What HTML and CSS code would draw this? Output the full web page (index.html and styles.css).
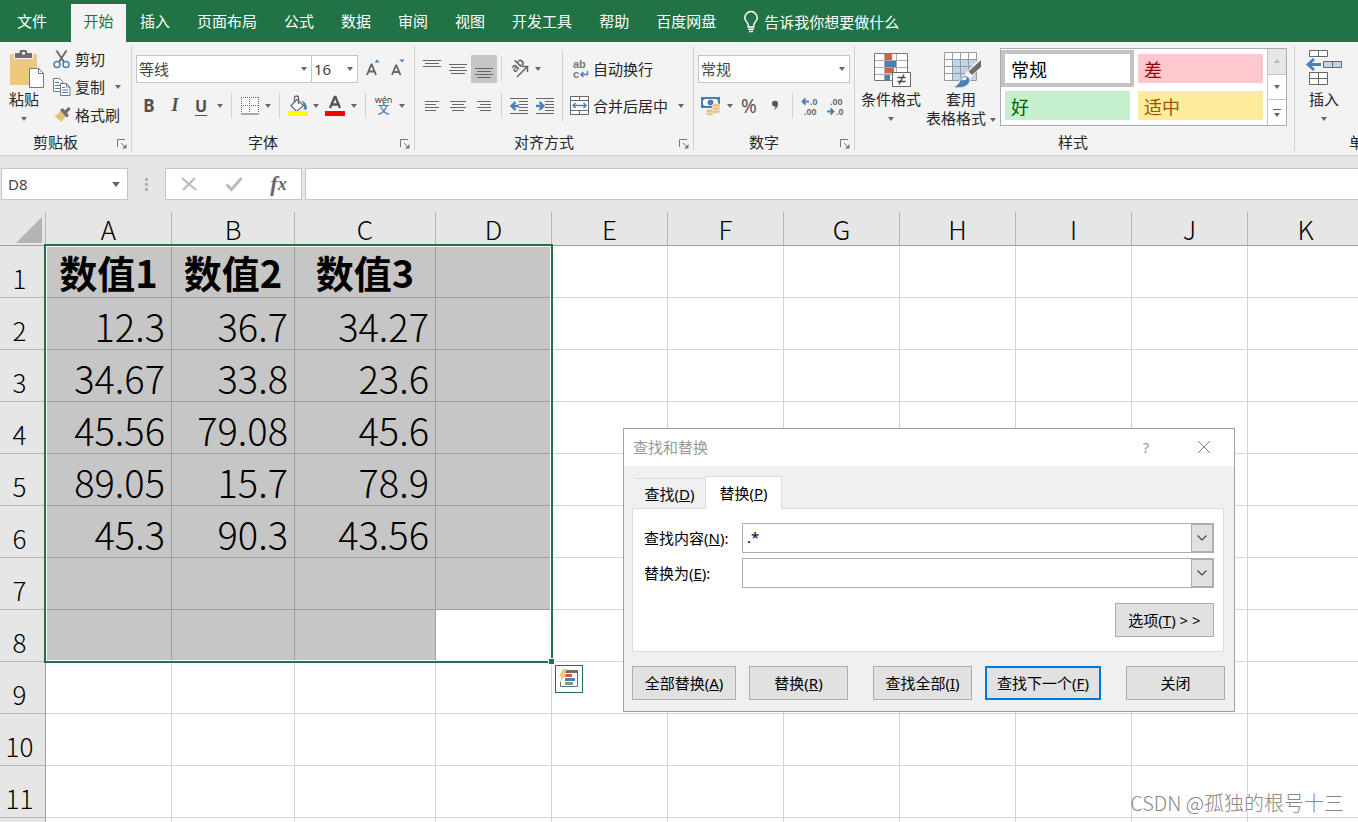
FILE: index.html
```
<!DOCTYPE html>
<html lang="zh-CN">
<head>
<meta charset="utf-8">
<title>工作表</title>
<link rel="stylesheet" href="styles.css">
</head>
<body>
<nav class="tabs">
  <button class="tab tab-file">文件</button>
  <button class="tab tab-active">开始</button>
  <button class="tab">插入</button>
  <button class="tab">页面布局</button>
  <button class="tab">公式</button>
  <button class="tab">数据</button>
  <button class="tab">审阅</button>
  <button class="tab">视图</button>
  <button class="tab">开发工具</button>
  <button class="tab">帮助</button>
  <button class="tab">百度网盘</button>
  <button class="tell">
    <svg width="16" height="22" viewBox="0 0 16 22" fill="none" stroke="#fff" stroke-width="1.5"><path d="M5.2 16v-2.500C5 11.500 1.800 10.500 1.800 6.800a6.200 6.200 0 0 1 12.400 0c0 3.700-3.200 4.700-3.400 6.700V16z"/><path d="M5 18.200h6M6 20.600h4"/></svg>
    <span>告诉我你想要做什么</span>
  </button>
</nav>

<header class="ribbon">
  <section class="group group-clip">
    <div class="group-body">
      <button class="big">
        <svg width="42" height="40" viewBox="-6 0 42 40"><path fill="#edc87e" d="M1 5h27v31H1z"/><path fill="#f3f3f3" d="M5 4h19v6H5z"/><path fill="#6d6d6d" d="M6 4h4.500V2.500Q10.500 1 12 1h4.500Q18 1 18 2.500V4H23v5H6z"/><path fill="#f3f3f3" d="M13 3h3v2.500h-3z"/><path fill="#fff" stroke="#777" d="M20.500 19.500h9l5 5v14h-14z"/><path fill="none" stroke="#777" d="M29.500 19.500v5h5"/></svg>
        <span>粘贴</span><i class="caret"></i>
      </button>
      <div class="clip-list">
        <button class="row-btn">
          <svg width="18" height="20" viewBox="0 0 18 20" fill="none"><path d="M3.500 1.500 11 13M13.500 1.500 6 13" stroke="#6d6d6d" stroke-width="2"/><circle cx="4" cy="15.500" r="3" stroke="#4a80b8" stroke-width="1.500"/><circle cx="13" cy="15.500" r="3" stroke="#4a80b8" stroke-width="1.500"/></svg>
          <span>剪切</span>
        </button>
        <button class="row-btn">
          <svg width="18" height="20" viewBox="0 0 18 20"><path fill="#fff" stroke="#777" d="M.5 1.500h6l3 3v10h-9z"/><path stroke="#4a80b8" d="M2 5.500h4M2 8.500h5M2 11.500h5"/><path fill="#fff" stroke="#777" d="M7.500 6.500h6l3.500 3.500v8.500H7.500z"/><path fill="none" stroke="#777" d="M13.500 6.500V10H17"/><path stroke="#4a80b8" d="M9 10.500h3M9 13h6M9 15.500h6"/></svg>
          <span>复制</span><i class="caret caret-gap"></i>
        </button>
        <button class="row-btn">
          <svg width="18" height="20" viewBox="0 0 18 20"><path fill="#e6bd74" d="m7 5.500 5.500 6L8.500 17 1 10.500q4 .5 6-5z"/><path fill="#6d6d6d" d="m7 5 2.500-2 2.500 2.500 3.500-3.700 2.200 2.200L14 8l2 2.500-2.500 2z"/></svg>
          <span>格式刷</span>
        </button>
      </div>
    </div>
    <div class="group-foot"><h2>剪贴板</h2><button class="launch" aria-label="剪贴板选项"><svg width="10" height="10" viewBox="0 0 10 10"><path fill="none" stroke="#777" d="M.5 8V.5H8M4 4l4 4"/><path fill="#777" d="M9.500 5v4.500H5z"/></svg></button></div>
  </section>

  <section class="group group-font">
    <div class="group-body stack">
      <div class="tool-row">
        <label class="combo combo-font"><select aria-label="字体"><option>等线</option></select></label>
        <label class="combo combo-size"><select aria-label="字号"><option>16</option></select></label>
        <button class="tool tool-slim tool-gap" aria-label="增大字号"><svg width="18" height="20" viewBox="0 0 18 20"><path fill="none" stroke="#666" stroke-width="1.900" d="M3 16 7.300 5.500h.4L12 16M4.500 12.500h6"/><path fill="#4a80b8" d="m10.500 3.500 2.500-3 2.500 3z"/></svg></button>
        <button class="tool tool-slim" aria-label="减小字号"><svg width="18" height="20" viewBox="0 0 18 20"><path fill="none" stroke="#666" stroke-width="1.800" d="M3 16 7 6.500h.4L11.500 16M4.500 13h5.500"/><path fill="#4a80b8" d="M10.500.5h5l-2.500 3z"/></svg></button>
      </div>
      <div class="tool-row">
        <button class="tool bold">B</button>
        <button class="tool italic">I</button>
        <button class="tool under">U</button>
        <button class="drop" aria-label="下划线选项"><i class="caret"></i></button>
        <i class="sep"></i>
        <button class="tool tool-slim" aria-label="边框"><svg width="18" height="18" viewBox="0 0 18 18" fill="none"><path fill="#fff" d="M0 0h18v18H0z"/><path stroke="#666" stroke-dasharray="1 1" d="M0 .5h18M0 8.500h18M.5 0v16M8.500 0v16M17.500 0v16"/><path stroke="#555" d="M0 17h18"/></svg></button>
        <button class="drop" aria-label="边框选项"><i class="caret"></i></button>
        <i class="sep"></i>
        <button class="tool tool-slim" aria-label="填充颜色"><svg width="22" height="22" viewBox="0 0 22 22"><path fill="#fff" stroke="#666" stroke-width="1.200" d="m10 4.500 6.500 6-7 6L4 10.500z"/><path fill="none" stroke="#666" stroke-width="1.300" d="M7.500 8V3Q7.500 1 9.500 1t2 2v6"/><path fill="#4a80b8" d="M14.500 5.500Q20 7 20 14.500h-3.500q1.500-4-2-9z"/><path fill="#ff0" d="M1 16h20v5H1z"/></svg></button>
        <button class="drop" aria-label="填充选项"><i class="caret"></i></button>
        <button class="tool" aria-label="字体颜色"><svg width="22" height="22" viewBox="0 0 22 22"><path fill="none" stroke="#555" stroke-width="2.300" d="m6 13 4.700-11h.8L16 13M7.500 9.500h7"/><path fill="#f00" d="M1 16h20v5H1z"/></svg></button>
        <button class="drop" aria-label="颜色选项"><i class="caret"></i></button>
        <i class="sep"></i>
        <button class="tool tool-slim pinyin"><span>wén</span><b>文</b></button>
        <button class="drop" aria-label="拼音选项"><i class="caret"></i></button>
      </div>
    </div>
    <div class="group-foot"><h2>字体</h2><button class="launch" aria-label="字体选项"><svg width="10" height="10" viewBox="0 0 10 10"><path fill="none" stroke="#777" d="M.5 8V.5H8M4 4l4 4"/><path fill="#777" d="M9.500 5v4.500H5z"/></svg></button></div>
  </section>

  <section class="group group-align">
    <div class="group-body">
      <div class="stack">
        <div class="tool-row">
          <button class="tool" aria-label="顶端对齐"><svg width="20" height="20" viewBox="0 0 20 20" stroke="#666"><path d="M1 1.500h18M3 4.500h14M1 7.500h18"/></svg></button>
          <button class="tool" aria-label="垂直居中"><svg width="20" height="20" viewBox="0 0 20 20" stroke="#666"><path d="M1 5.500h18M3 8.500h14M1 11.500h18M3 14.500h14"/></svg></button>
          <button class="tool tool-on" aria-label="底端对齐"><svg width="20" height="20" viewBox="0 0 20 20" stroke="#666"><path d="M1 9.500h18M3 12.500h14M1 15.500h18M3 18.500h14"/></svg></button>
          <i class="sep sep-near"></i>
          <button class="tool" aria-label="方向"><svg width="22" height="20" viewBox="0 0 22 20"><text class="rot-text" x="0" y="0" transform="translate(7 14) rotate(-45)">ab</text><path fill="none" stroke="#666" stroke-width="1.500" d="m9 18 10-10M14 7.500h5.500V13"/></svg></button>
          <button class="drop" aria-label="方向选项"><i class="caret"></i></button>
        </div>
        <div class="tool-row">
          <button class="tool" aria-label="左对齐"><svg width="20" height="20" viewBox="0 0 20 20" stroke="#666"><path d="M3 5.500h14M3 8.500h11M3 11.500h14M3 14.500h11"/></svg></button>
          <button class="tool" aria-label="居中"><svg width="20" height="20" viewBox="0 0 20 20" stroke="#666"><path d="M2 5.500h16M4 8.500h12M2 11.500h16M4 14.500h12"/></svg></button>
          <button class="tool" aria-label="右对齐"><svg width="20" height="20" viewBox="0 0 20 20" stroke="#666"><path d="M3 5.500h14M6 8.500h11M3 11.500h14M6 14.500h11"/></svg></button>
          <i class="sep sep-near"></i>
          <button class="tool" aria-label="减少缩进"><svg width="20" height="20" viewBox="0 0 20 20"><path stroke="#666" d="M1 2.500h18M10 5.500h9M10 8.500h9M10 11.500h9M10 14.500h9M1 17.500h18"/><path fill="none" stroke="#4a80b8" stroke-width="2.400" d="M10 10H3M6.500 6l-4 4 4 4"/></svg></button>
          <button class="tool" aria-label="增加缩进"><svg width="20" height="20" viewBox="0 0 20 20"><path stroke="#666" d="M1 2.500h18M10 5.500h9M10 8.500h9M10 11.500h9M10 14.500h9M1 17.500h18"/><path fill="none" stroke="#4a80b8" stroke-width="2.400" d="M1 10h7M4.500 6l4 4-4 4"/></svg></button>
        </div>
      </div>
      <i class="sep sep-tall"></i>
      <div class="stack">
        <button class="row-btn wide-btn">
          <svg width="20" height="24" viewBox="0 0 20 24"><text class="abc" x="3" y="11">ab</text><text class="abc" x="3" y="21">c</text><path fill="none" stroke="#4a80b8" stroke-width="1.400" d="M17.500 14v3.500H11M13.500 15l-2.700 2.500 2.700 2.500"/></svg>
          <span>自动换行</span>
        </button>
        <button class="row-btn wide-btn">
          <svg width="20" height="20" viewBox="0 0 20 20"><path fill="#fff" stroke="#666" d="M.5.500h18v18H.5zM.5 4.500h18M.5 14.500h18M9.500.500v4M9.500 14.500v4"/><path fill="none" stroke="#4a80b8" stroke-width="1.500" d="M3 9.500h13M5.500 7 3 9.500 5.500 12M13.500 7l2.500 2.500-2.500 2.500"/></svg>
          <span>合并后居中</span><i class="caret caret-gap caret-far"></i>
        </button>
      </div>
    </div>
    <div class="group-foot"><h2>对齐方式</h2><button class="launch" aria-label="对齐选项"><svg width="10" height="10" viewBox="0 0 10 10"><path fill="none" stroke="#777" d="M.5 8V.5H8M4 4l4 4"/><path fill="#777" d="M9.500 5v4.500H5z"/></svg></button></div>
  </section>

  <section class="group group-num">
    <div class="group-body stack">
      <div class="tool-row"><label class="combo combo-fill"><select aria-label="数字格式"><option>常规</option></select></label></div>
      <div class="tool-row">
        <button class="tool" aria-label="会计格式"><svg width="20" height="20" viewBox="0 0 20 20"><path fill="#4a80b8" d="M0 1h19v11H0z"/><path fill="#fff" d="M2 4.500 4 3h11l2 1.500v4L15 10H4L2 8.500z"/><circle cx="9.500" cy="6.500" r="3" fill="#4a80b8"/><g fill="#e9bf78" stroke="#f3f3f3" stroke-width=".7"><ellipse cx="9" cy="17.500" rx="4" ry="2"/><ellipse cx="9" cy="15" rx="4" ry="2"/><ellipse cx="15" cy="15.500" rx="4" ry="2"/><ellipse cx="15" cy="12.500" rx="4" ry="2"/><ellipse cx="15" cy="9.500" rx="4" ry="2"/></g></svg></button>
        <button class="drop" aria-label="会计格式选项"><i class="caret"></i></button>
        <button class="tool percent">%</button>
        <button class="tool" aria-label="千位分隔"><svg width="12" height="16" viewBox="0 0 12 16"><path fill="#555" d="M3 6a3 3 0 1 1 6-.3Q9 10 4.500 12q2.300-2 1.900-3.500Q3.300 9 3 6z"/></svg></button>
        <i class="sep sep-near"></i>
        <button class="tool" aria-label="增加小数位数"><svg width="20" height="24" viewBox="0 0 20 24"><text class="dec" x="10" y="11">.0</text><text class="dec" x="4" y="21">.00</text><path fill="none" stroke="#4a80b8" stroke-width="1.800" d="M9 7.500H3M5.500 4.500l-3 3 3 3"/></svg></button>
        <button class="tool" aria-label="减少小数位数"><svg width="20" height="24" viewBox="0 0 20 24"><text class="dec" x="4" y="11">.00</text><text class="dec" x="10" y="21">.0</text><path fill="none" stroke="#4a80b8" stroke-width="1.800" d="M1 17.500h6M4.500 14.500l3 3-3 3"/></svg></button>
      </div>
    </div>
    <div class="group-foot"><h2>数字</h2><button class="launch" aria-label="数字选项"><svg width="10" height="10" viewBox="0 0 10 10"><path fill="none" stroke="#777" d="M.5 8V.5H8M4 4l4 4"/><path fill="#777" d="M9.500 5v4.500H5z"/></svg></button></div>
  </section>

  <section class="group group-style">
    <div class="group-body">
      <button class="big big-wide">
        <svg width="40" height="40" viewBox="0 0 40 40"><path fill="#fff" d="M3.500 4.500h33v27h-33z"/><path fill="#d9603f" d="M14 5h7v6h-7zM14 19h9v5.500h-9z"/><path fill="#4a80b8" d="M14 12h11v6H14zM14 26h5v5h-5z"/><path fill="none" stroke="#aaa" d="M3.500 11.500h33M3.500 18.500h33M3.500 25.500h33M13.500 4.500v27M25.500 4.500v27"/><path fill="none" stroke="#777" d="M3.500 4.500h33v27h-33z"/><path fill="#fff" stroke="#666" d="M21.500 23.500h18v14h-18z"/><path fill="none" stroke="#444" stroke-width="1.300" d="M26.500 28.500h8M26.500 32.500h8M33 25.500l-5 10"/></svg>
        <span>条件格式</span><i class="caret"></i>
      </button>
      <button class="big big-wide">
        <svg width="40" height="40" viewBox="0 0 40 40"><path fill="#fff" d="M3.500 3.500h32v28h-32z"/><path fill="#c0d4ea" d="M12 10h23.500v21.500H12z"/><path fill="none" stroke="#999" d="M3.500 10.500h32M3.500 17.500h32M3.500 24.500h32M11.500 3.500v28M19.500 3.500v28M27.500 3.500v28M3.500 3.500h32v28h-32z"/><path stroke="#f3f3f3" stroke-width="7" d="m26 28 13-14"/><path fill="#6d6d6d" d="M40 11v7L31 26l-3.500-3.500z"/><path fill="#4a80b8" stroke="#f3f3f3" d="M12 38.500q6-3 7.500-8 3.500-6 8-2.500 3.500 4-1 8-5 4-14.500 2.500z"/><path fill="#fff" d="M20.500 31q3-5 5.500-2-1 3-5.500 2z"/></svg>
        <span>套用</span><span class="nowrap">表格格式<i class="caret caret-near"></i></span>
      </button>
      <div class="gallery">
        <div class="swatches">
          <button class="swatch normal">常规</button>
          <button class="swatch bad">差</button>
          <button class="swatch good">好</button>
          <button class="swatch neutral">适中</button>
        </div>
        <div class="gallery-nav">
          <button class="nav-off" aria-label="上一行"><i class="caret caret-up"></i></button>
          <button aria-label="下一行"><i class="caret"></i></button>
          <button class="more" aria-label="更多样式"><i class="bar"></i><i class="caret"></i></button>
        </div>
      </div>
    </div>
    <div class="group-foot"><h2>样式</h2></div>
  </section>

  <section class="group group-cells">
    <div class="group-body">
      <button class="big big-cells">
        <svg width="38" height="40" viewBox="0 0 38 40"><path fill="#fff" stroke="#666" d="M4.500 1.500h18v6h-18zM13.500 1.500v6M4.500 23.500h18v12h-18zM4.500 29.500h18M13.500 23.500v12"/><path fill="#c0d4ea" stroke="#666" d="M18.500 12.500h18v6h-18zM27.500 12.500v6"/><path fill="none" stroke="#4a80b8" stroke-width="2.800" d="M16 15.500H4M9 10l-6 5.500L9 21"/></svg>
        <span>插入</span><i class="caret"></i>
      </button>
    </div>
    <div class="group-foot"><h2>单元格</h2></div>
  </section>
</header>

<div class="formula-bar">
  <label class="combo name-box"><select aria-label="名称框"><option>D8</option></select></label>
  <div class="dots"><i></i><i></i><i></i></div>
  <div class="fx-box">
    <button aria-label="取消"><svg width="16" height="16" viewBox="0 0 16 16"><path stroke="#bbb" stroke-width="2" d="m1 2 14 12M14 2 2 14"/></svg></button>
    <button aria-label="输入"><svg width="18" height="16" viewBox="0 0 18 16"><path fill="none" stroke="#bbb" stroke-width="3" d="m1.500 8.500 5 5L16.500 2"/></svg></button>
    <button class="fx"><i>f</i><small>x</small></button>
  </div>
  <input class="formula" type="text" aria-label="编辑栏">
</div>

<main class="sheet">
  <table class="grid">
    <colgroup><col class="c-head"><col class="c-a"><col class="c-b"><col class="c-c"><col span="8" class="c-std"></colgroup>
    <thead><tr><th class="corner"><svg width="26" height="26" viewBox="0 0 26 26"><path fill="#b4b4b4" d="M26 0v26H0z"/></svg></th><th>A</th><th>B</th><th>C</th><th>D</th><th>E</th><th>F</th><th>G</th><th>H</th><th>I</th><th>J</th><th>K</th></tr></thead>
    <tbody>
      <tr class="title-row"><th>1</th><td class="sel">数值1</td><td class="sel">数值2</td><td class="sel">数值3</td><td class="sel"></td><td></td><td></td><td></td><td></td><td></td><td></td><td></td></tr>
      <tr><th>2</th><td class="sel">12.3</td><td class="sel">36.7</td><td class="sel">34.27</td><td class="sel"></td><td></td><td></td><td></td><td></td><td></td><td></td><td></td></tr>
      <tr><th>3</th><td class="sel">34.67</td><td class="sel">33.8</td><td class="sel">23.6</td><td class="sel"></td><td></td><td></td><td></td><td></td><td></td><td></td><td></td></tr>
      <tr><th>4</th><td class="sel">45.56</td><td class="sel">79.08</td><td class="sel">45.6</td><td class="sel"></td><td></td><td></td><td></td><td></td><td></td><td></td><td></td></tr>
      <tr><th>5</th><td class="sel">89.05</td><td class="sel">15.7</td><td class="sel">78.9</td><td class="sel"></td><td></td><td></td><td></td><td></td><td></td><td></td><td></td></tr>
      <tr><th>6</th><td class="sel">45.3</td><td class="sel">90.3</td><td class="sel">43.56</td><td class="sel"></td><td></td><td></td><td></td><td></td><td></td><td></td><td></td></tr>
      <tr><th>7</th><td class="sel"></td><td class="sel"></td><td class="sel"></td><td class="sel"></td><td></td><td></td><td></td><td></td><td></td><td></td><td></td></tr>
      <tr><th>8</th><td class="sel"></td><td class="sel"></td><td class="sel"></td><td></td><td></td><td></td><td></td><td></td><td></td><td></td><td></td></tr>
      <tr><th>9</th><td></td><td></td><td></td><td></td><td></td><td></td><td></td><td></td><td></td><td></td><td></td></tr>
      <tr><th>10</th><td></td><td></td><td></td><td></td><td></td><td></td><td></td><td></td><td></td><td></td><td></td></tr>
      <tr><th>11</th><td></td><td></td><td></td><td></td><td></td><td></td><td></td><td></td><td></td><td></td><td></td></tr>
      <tr><th></th><td></td><td></td><td></td><td></td><td></td><td></td><td></td><td></td><td></td><td></td><td></td></tr>
    </tbody>
  </table>
  <div class="selection"><i class="handle"></i></div>
  <button class="quick" aria-label="快速分析"><svg width="20" height="20" viewBox="0 0 20 20"><path fill="#fff" stroke="#6d6d6d" d="M1.500 3h17v14.500h-17z"/><path fill="#6d6d6d" d="M6 1h13v3H6z"/><path fill="#fff" d="M0 0h6v13H0z"/><path fill="#dd5433" d="M6 5h7v3H6z"/><path fill="#4a80b8" d="M6 9h10v3H6z"/><path fill="#68a793" d="M6 13h8v3H6z"/><path fill="#edc87e" d="M4 0h4L6 4.500h2L1 13l1.500-5.500H0z"/></svg></button>
</main>

<section class="dialog" role="dialog" aria-labelledby="dlg-title">
  <div class="dlg-bar">
    <h1 id="dlg-title">查找和替换</h1>
    <button class="dlg-help" aria-label="帮助">?</button>
    <button class="dlg-close" aria-label="关闭窗口"><svg width="14" height="14" viewBox="0 0 14 14"><path stroke="#888" d="m1 1 12 12M13 1 1 13"/></svg></button>
  </div>
  <div class="dlg-body">
    <div class="dlg-tabs">
      <button class="dlg-tab">查找(<u>D</u>)</button>
      <button class="dlg-tab dlg-tab-on">替换(<u>P</u>)</button>
    </div>
    <div class="dlg-panel">
      <div class="field">
        <label for="find">查找内容(<u>N</u>):</label>
        <div class="field-box"><input id="find" type="text" value=".*"><button aria-label="查找记录"><svg width="12" height="8" viewBox="0 0 12 8"><path fill="none" stroke="#444" stroke-width="1.200" d="m1.500 1.500 4.500 4.500 4.500-4.500"/></svg></button></div>
      </div>
      <div class="field">
        <label for="repl">替换为(<u>E</u>):</label>
        <div class="field-box"><input id="repl" type="text"><button aria-label="替换记录"><svg width="12" height="8" viewBox="0 0 12 8"><path fill="none" stroke="#444" stroke-width="1.200" d="m1.500 1.500 4.500 4.500 4.500-4.500"/></svg></button></div>
      </div>
      <button class="btn btn-options">选项(<u>T</u>) &gt; &gt;</button>
    </div>
    <div class="dlg-actions">
      <button class="btn btn-all">全部替换(<u>A</u>)</button>
      <button class="btn">替换(<u>R</u>)</button>
      <span class="grow"></span>
      <button class="btn">查找全部(<u>I</u>)</button>
      <button class="btn btn-default">查找下一个(<u>F</u>)</button>
      <span class="grow"></span>
      <button class="btn">关闭</button>
    </div>
  </div>
</section>
<div class="watermark">CSDN @孤独的根号十三</div>
</body>
</html>
```
FILE: styles.css
```
* { box-sizing: border-box; }

body {
  margin: 0;
  height: 100vh;
  overflow: hidden;
  position: relative;
  display: flex;
  flex-direction: column;
  background: #e6e6e6;
  color: #262626;
  font: 15px/20px "Noto Sans", "Noto Sans CJK SC", sans-serif;
}

button, input, select {
  margin: 0;
  padding: 0;
  border: 0;
  background: none;
  color: inherit;
  font: inherit;
  border-radius: 0;
}

h1, h2 { margin: 0; font-size: 15px; font-weight: 400; }
svg { display: block; flex: none; overflow: visible; }

/* Tab strip */
.tabs {
  display: flex;
  flex: none;
  gap: 1px;
  padding-top: 4px;
  height: 42px;
  background: #217346;
  color: #fff;
  overflow: hidden;
}
.tab { flex: none; padding: 0 13px 4px; white-space: nowrap; }
.tab-file { padding: 0 23px 4px 17px; }
.tab-active { width: 55px; padding: 0 12px 4px; background: #f3f3f3; color: #217346; }
.tell { display: flex; align-items: center; gap: 5px; margin-left: 13px; padding-bottom: 2px; white-space: nowrap; }

/* Ribbon */
.ribbon {
  display: flex;
  flex: none;
  height: 114px;
  padding: 4px 0;
  background: #f3f3f3;
  border-bottom: 1px solid #d2d2d2;
  overflow: hidden;
}
.group {
  display: flex;
  flex: none;
  flex-direction: column;
  justify-content: space-between;
  padding: 0 4px;
  border-right: 1px solid #d2d2d2;
}
.group-clip { width: 132px; }
.group-font { width: 283px; }
.group-align { width: 279px; }
.group-num { width: 161px; }
.group-style { width: 440px; padding-left: 1px; }
.group-cells { width: 158px; padding-left: 0; }
.group-body { display: flex; height: 84px; }
.group-foot { display: flex; align-items: center; height: 18px; }
.group-foot h2 { flex: 1; text-align: center; }
.group-foot h2:not(:last-child) { margin-right: 10px; }
.launch { padding-top: 4px; }

.caret {
  flex: none;
  border: 3px solid transparent;
  border-top: 4px solid #666;
  border-bottom: 0;
}
.caret-up { border-top: 0; border-bottom: 4px solid #bbb; }
.caret-gap { margin-left: 6px; }
.caret-far { margin-left: 7px; }
.caret-near { display: inline-block; margin-left: 4px; vertical-align: middle; }

.big { display: flex; flex-direction: column; align-items: center; width: 40px; line-height: 19px; }
.big svg { margin: 3px 0 1px; }
.big > .caret { margin-top: 8px; }
.big-wide { width: 70px; }
.big-cells { width: 58px; }
.nowrap { white-space: nowrap; }

.clip-list { display: flex; flex-direction: column; margin-left: 9px; }
.row-btn { display: flex; align-items: center; gap: 4px; height: 28px; padding-bottom: 2px; white-space: nowrap; }
.wide-btn { height: 37px; gap: 3px; padding-bottom: 0; }

.stack { display: flex; flex-direction: column; }
.group-body.stack, .group-body > .stack { padding-top: 4px; }
.tool-row { display: flex; align-items: center; height: 37px; }
.tool { display: flex; flex: none; align-items: center; justify-content: center; width: 26px; height: 28px; }
.tool-slim { width: 25px; }
.tool-on { background: #c6c6c6; }
.tool-gap { margin-left: 2px; }
.drop { display: flex; flex: none; align-items: center; justify-content: center; width: 12px; height: 28px; }
.sep { flex: none; width: 1px; height: 25px; margin: 0 5px; background: #d2d2d2; }
.sep-near { margin: 0 4px; }
.sep-tall { height: 72px; margin: 4px 7px 0 4px; }
.bold { color: #505050; font-weight: 700; font-size: 17px; }
.italic { color: #505050; font: italic 700 18px "Liberation Serif", serif; }
.under { color: #505050; font-weight: 700; font-size: 16px; text-decoration: underline; text-decoration-thickness: 1px; text-underline-offset: 3px; }
.percent { color: #555; font-size: 19px; }
.pinyin { flex-direction: column; color: #444; font-size: 9px; line-height: 9px; }
.pinyin b { color: #4a80b8; font-size: 12px; line-height: 12px; font-weight: 500; }
.abc { font: 700 11px "Liberation Sans", sans-serif; fill: #777; }
.rot-text { font: 600 12px "Noto Sans", sans-serif; fill: #666; }
.dec { font: 700 9px "Liberation Sans", sans-serif; fill: #666; }

.combo {
  display: grid;
  flex: none;
  align-items: center;
  height: 28px;
  background: #fff;
  border: 1px solid #c6c6c6;
}
.combo select {
  grid-area: 1 / 1;
  width: 100%;
  padding-left: 2px;
  appearance: none;
  outline: 0;
  color: #444;
  font-size: 15px;
}
.combo::after {
  content: "";
  grid-area: 1 / 1;
  justify-self: end;
  margin-right: 4px;
  border: 3px solid transparent;
  border-top: 4px solid #666;
  border-bottom: 0;
  pointer-events: none;
}
.combo-font { width: 176px; }
.combo-size { width: 46px; border-left: 0; }
.combo-fill { flex: 1; }

/* Style gallery */
.gallery { display: flex; flex: 1; height: 78px; margin: 2px 3px 0 4px; background: #fff; border: 1px solid #ababab; }
.swatches { display: grid; flex: 1; grid-template-columns: 1fr 1fr; gap: 8px; padding: 5px 4px; }
.swatch { padding-left: 6px; text-align: left; font: 18px/28px "Noto Sans CJK SC", sans-serif; }
.normal { background: #fff; color: #000; outline: 4px solid #c3c3c3; }
.bad { background: #ffc7ce; color: #9c0006; }
.good { background: #c6efce; color: #006100; }
.neutral { background: #ffeb9c; color: #9c5700; }
.gallery-nav { display: flex; flex-direction: column; width: 19px; border-left: 1px solid #c6c6c6; }
.gallery-nav button { display: flex; flex: 1; flex-direction: column; align-items: center; justify-content: center; gap: 3px; border-bottom: 1px solid #c6c6c6; }
.gallery-nav .more { border-bottom: 0; }
.gallery-nav .nav-off { background: #e6e6e6; }
.bar { width: 8px; height: 1px; background: #666; }

/* Formula bar */
.formula-bar { display: flex; flex: none; height: 56px; padding: 12px 0 12px 1px; }
.name-box { width: 127px; height: 32px; }
.name-box select { padding-left: 6px; }
.name-box::after { margin-right: 7px; border-width: 5px 4px 0; }
.dots { display: flex; flex-direction: column; justify-content: center; gap: 2px; width: 37px; padding-left: 17px; }
.dots i { width: 3px; height: 3px; background: #b0b0b0; }
.fx-box { display: grid; grid-template-columns: 1fr 1fr 1fr; width: 137px; background: #fff; border: 1px solid #c6c6c6; }
.fx-box button { display: flex; align-items: center; justify-content: center; }
.fx { color: #666; font: italic 700 22px "Liberation Serif", serif; }
.fx small { font-size: 18px; }
.formula { flex: 1; min-width: 0; margin-left: 3px; padding: 0 6px; background: #fff; border: 1px solid #c6c6c6; border-right: 0; }

/* Worksheet */
.sheet { position: relative; flex: 1; min-height: 0; overflow: hidden; font-family: "Noto Sans CJK SC", sans-serif; }
.grid { width: 1364px; table-layout: fixed; border-collapse: separate; border-spacing: 0; background: #fff; color: #000; }
.c-head { width: 46px; }
.c-a { width: 126px; }
.c-b { width: 123px; }
.c-c { width: 141px; }
.c-std { width: 116px; }
.grid th, .grid td { padding: 0; border-right: 1px solid #d4d4d4; border-bottom: 1px solid #d4d4d4; }
.grid th { background: #e6e6e6; border-color: #b6b6b6; font-size: 26px; line-height: 30px; font-weight: 300; }
.grid thead th { height: 34px; border-bottom-color: #9f9f9f; }
.grid .corner { padding: 2px 3px 0 0; }
.corner svg { margin-left: auto; }
.grid tbody th { height: 52px; padding: 12px 6px 0 0; border-right-color: #9f9f9f; }
.grid td { padding: 4px 6px 0 0; font-size: 38px; line-height: 40px; font-weight: 300; text-align: right; }
.grid .sel { background: #c6c6c6; border-color: #9f9f9f; }
.grid .title-row td { padding: 0; font-weight: 700; text-align: center; }
.selection { position: absolute; left: 44px; top: 32px; width: 509px; height: 419px; border: 2px solid #217346; box-shadow: inset 0 0 0 1px #fff; pointer-events: none; }
.handle { position: absolute; right: -4px; bottom: -4px; width: 7px; height: 7px; background: #217346; border: 1px solid #fff; }
.quick { position: absolute; left: 555px; top: 453px; display: grid; place-items: center; width: 28px; height: 28px; background: #fff; border: 1px solid #217346; }

/* Find and replace window */
.dialog { position: absolute; left: 623px; top: 428px; width: 612px; background: #f0f0f0; border: 1px solid #a0a0a0; color: #000; }
.dlg-bar { display: flex; align-items: center; height: 37px; padding: 0 22px 2px 9px; background: #fff; color: #999; }
.dlg-bar h1 { flex: 1; }
.dlg-help { width: 28px; }
.dlg-close { display: grid; place-items: center; width: 16px; margin-left: 36px; }
.dlg-body { padding: 10px 10px 11px 8px; }
.dlg-tabs { display: flex; align-items: flex-end; padding-left: 2px; }
.dlg-tab { width: 71px; height: 30px; border-top: 1px solid #dcdcdc; }
.dlg-tab-on { width: 77px; height: 33px; margin-bottom: -1px; background: #fff; border: 1px solid #dcdcdc; border-bottom: 0; z-index: 1; }
.dlg-panel { display: flex; flex-direction: column; gap: 5px; height: 144px; padding: 14px 9px 0 11px; background: #fff; border: 1px solid #dcdcdc; }
.field { display: flex; align-items: center; }
.field label { width: 98px; }
.field-box { display: flex; flex: 1; height: 30px; border: 1px solid #abadb3; }
.field-box input { flex: 1; min-width: 0; padding: 0 4px 2px; outline: 0; }
.field-box button { display: grid; place-items: center; width: 22px; background: #e1e1e1; border: 1px solid #adadad; }
.btn { width: 99px; height: 34px; background: #e1e1e1; border: 1px solid #adadad; white-space: nowrap; }
.btn-options { align-self: flex-end; margin-top: 10px; }
.btn-all { width: 104px; }
.btn-default { width: 116px; border: 2px solid #0078d7; }
.dlg-actions { display: flex; gap: 13px; margin-top: 14px; margin-right: -1px; }
.grow { flex: 1; margin-right: -13px; }

.watermark { position: absolute; right: 14px; bottom: 5px; color: #888; font: 300 20px/28px "Noto Sans CJK SC", sans-serif; text-shadow: 1px 1px 0 #fff; }
```
